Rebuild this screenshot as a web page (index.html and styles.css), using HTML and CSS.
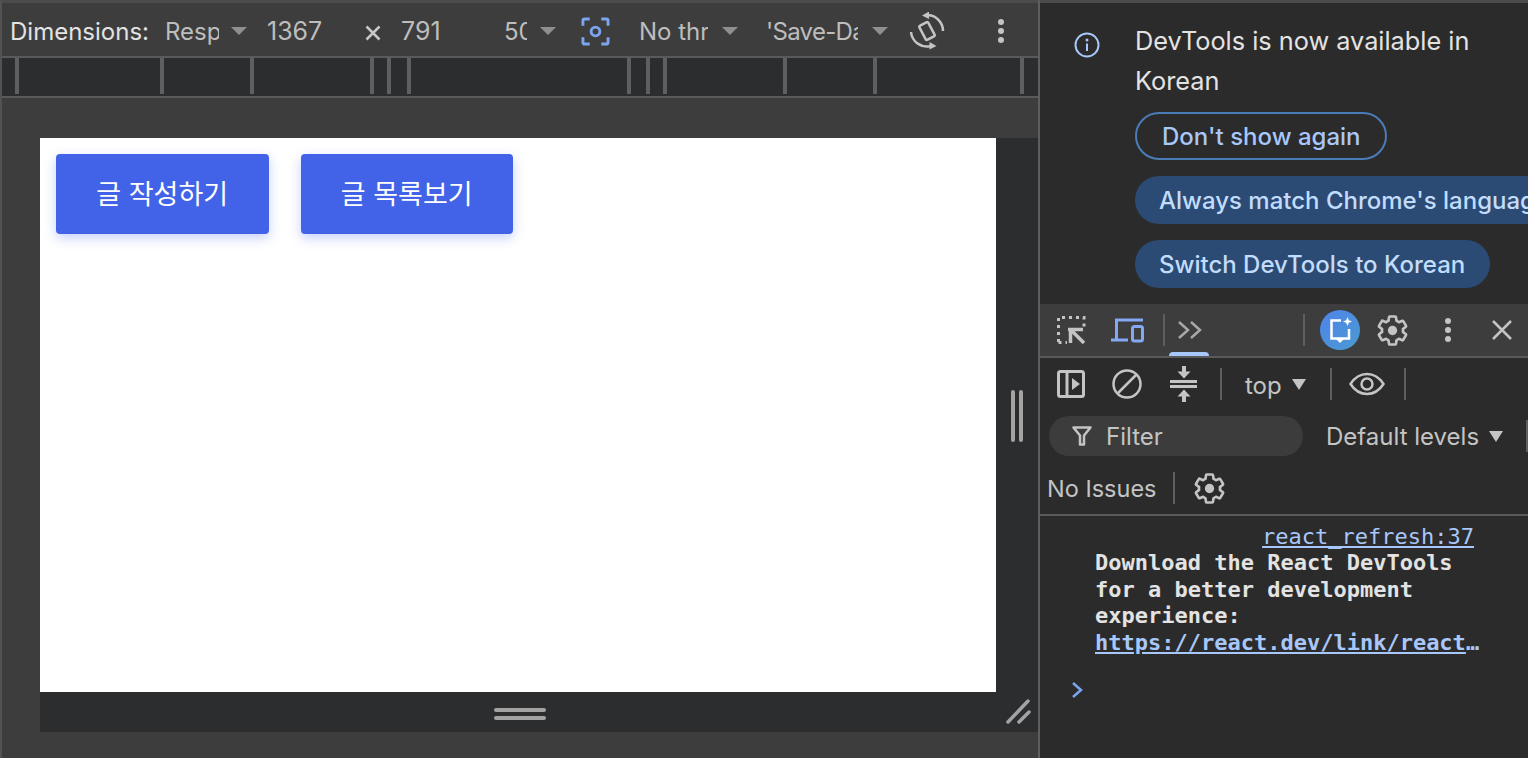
FILE: index.html
```html
<!DOCTYPE html>
<html lang="ko">
<head>
    <meta charset="UTF-8">
    <meta name="viewport" content="width=device-width, initial-scale=1.0">
    <title>DevTools</title>
    <link rel="stylesheet" href="styles.css">
</head>
<body>
    <div class="emulation">
        <div class="device-bar">
            <span class="bar-label">Dimensions:</span>
            <span class="select select-device">Resp</span>
            <span class="caret caret-device"></span>
            <span class="dim dim-w">1367</span>
            <svg class="times" width="16" height="16" viewBox="0 0 16 16"><path d="M1.500 1.500l13 13M14.500 1.500l-13 13"/></svg>
            <span class="dim dim-h">791</span>
            <span class="select select-zoom">50%</span>
            <span class="caret caret-zoom"></span>
            <svg class="focus-icon" width="29" height="29" viewBox="0 0 30 30">
                <path d="M9 2H3.500A1.500 1.500 0 0 0 2 3.500V9M21 2h5.500A1.500 1.500 0 0 1 28 3.500V9M9 28H3.500A1.500 1.500 0 0 1 2 26.500V21M21 28h5.500a1.500 1.500 0 0 0 1.500-1.500V21"/>
                <circle cx="15" cy="15" r="4.500"/>
            </svg>
            <span class="select select-throttle">No thrott</span>
            <span class="caret caret-throttle"></span>
            <span class="select select-save">'Save-Data</span>
            <span class="caret caret-save"></span>
            <svg class="rotate-icon" width="38" height="38" viewBox="0 0 38 38">
                <rect x="14" y="11" width="10" height="16" rx="1.500" transform="rotate(-28 19 19)"/>
                <path d="M20 3A16 16 0 0 1 35 19M3 20A16 16 0 0 0 23 34"/>
                <path class="solid" d="M14 3.500l7-4v7.500zM28.500 34l-7 3.500v-7.500z"/>
            </svg>
            <svg class="dots dots-device" width="6" height="24" viewBox="0 0 6 24"><circle cx="3" cy="3" r="3"/><circle cx="3" cy="12" r="3"/><circle cx="3" cy="21" r="3"/></svg>
        </div>

        <div class="ruler">
            <svg width="1036" height="38" viewBox="0 0 1036 38">
                <g fill="#5f5f5f">
                    <rect x="13" width="4" height="36"/><rect x="158" width="4" height="36"/>
                    <rect x="248" width="4" height="36"/><rect x="368" width="4" height="36"/>
                    <rect x="385" width="4" height="36"/><rect x="405" width="4" height="36"/>
                    <rect x="625" width="4" height="36"/><rect x="644" width="4" height="36"/>
                    <rect x="661" width="4" height="36"/><rect x="781" width="4" height="36"/>
                    <rect x="871" width="4" height="36"/><rect x="1018" width="4" height="36"/>
                </g>
            </svg>
        </div>

        <div class="stage">
            <div class="device-frame">
                <div class="frame-top">
                    <div class="viewport">
                        <button class="btn-main">글 작성하기</button>
                        <button class="btn-main">글 목록보기</button>
                    </div>
                    <div class="handle-right"><span></span><span></span></div>
                </div>
                <div class="frame-bottom">
                    <div class="handle-bottom"><span></span><span></span></div>
                    <svg class="handle-corner" width="26" height="26" viewBox="0 0 26 26"><path d="M2 23L22 2M13 23l10-10"/></svg>
                </div>
            </div>
        </div>
    </div>

    <div class="devtools">
        <div class="notice">
            <svg class="info-icon" width="26" height="26" viewBox="0 0 26 26">
                <circle cx="13" cy="13" r="11.500"/>
                <path d="M13 11.500V19"/>
                <circle class="info-dot" cx="13" cy="8" r="1.500"/>
            </svg>
            <div class="notice-body">
                <p class="notice-text">DevTools is now available in Korean</p>
                <button class="pill pill-outline">Don't show again</button>
                <button class="pill pill-filled pill-wide"><span>Always match Chrome's language</span></button>
                <button class="pill pill-filled">Switch DevTools to Korean</button>
            </div>
        </div>

        <div class="tab-bar">
            <svg class="inspect-icon" width="30" height="30" viewBox="0 0 30 30">
                <path class="dash" d="M2.500 27V2.500H28V12"/>
                <path class="dash" d="M2.500 27.500H11"/>
                <path d="M12 14.500h15M14.500 13v15M15 15l13 13"/>
            </svg>
            <svg class="device-icon" width="34" height="26" viewBox="0 0 34 26">
                <path d="M6.500 22V3H33M1 23h17"/>
                <rect x="22.500" y="9.500" width="10" height="14.500" rx="2"/>
            </svg>
            <span class="sep sep-tabs-1"></span>
            <svg class="more-tabs" width="26" height="20" viewBox="0 0 26 20"><path d="M2 2l9 8-9 8M14 2l9 8-9 8"/></svg>
            <span class="tab-marker"></span>
            <span class="sep sep-tabs-2"></span>
            <span class="ai-button">
                <svg width="24" height="28" viewBox="0 0 24 28">
                    <path class="ai-bubble" d="M13 4.500H3.500V22.500H21V13"/>
                    <path class="ai-star" d="M19.500 1l1.300 3.200L24 5.500l-3.200 1.300L19.500 10l-1.300-3.200L15 5.500l3.200-1.300zM8 23h8l-4 4z"/>
                </svg>
            </span>
            <svg class="gear gear-tabs" width="35" height="35" viewBox="0 0 24 24"><path d="M19.140 12.940c.04-.3.06-.61.06-.94 0-.32-.02-.64-.07-.94l2.030-1.580c.18-.14.23-.41.12-.61l-1.920-3.320c-.12-.22-.37-.29-.59-.22l-2.390.96c-.5-.38-1.030-.7-1.620-.94l-.36-2.540c-.04-.24-.24-.41-.48-.41h-3.840c-.24 0-.43.17-.47.41l-.36 2.540c-.59.24-1.130.57-1.620.94l-2.390-.96c-.22-.08-.47 0-.59.22L2.740 8.870c-.12.21-.08.47.12.61l2.030 1.580c-.05.3-.09.63-.09.94s.02.64.07.94l-2.030 1.580c-.18.14-.23.41-.12.61l1.920 3.320c.12.22.37.29.59.22l2.390-.96c.5.38 1.030.7 1.620.94l.36 2.540c.05.24.24.41.48.41h3.840c.24 0 .44-.17.47-.41l.36-2.540c.59-.24 1.130-.56 1.620-.94l2.390.96c.22.08.47 0 .59-.22l1.920-3.320c.12-.22.07-.47-.12-.61l-2.010-1.580z"/><circle cx="12" cy="12" r="3.200"/></svg>
            <svg class="dots dots-tabs" width="6" height="24" viewBox="0 0 6 24"><circle cx="3" cy="3" r="3"/><circle cx="3" cy="12" r="3"/><circle cx="3" cy="21" r="3"/></svg>
            <svg class="close-icon" width="20" height="20" viewBox="0 0 20 20"><path d="M1 1l18 18M19 1L1 19"/></svg>
        </div>

        <div class="console-bar">
            <svg class="sidebar-icon" width="28" height="28" viewBox="0 0 28 28">
                <rect x="1.500" y="1.500" width="25" height="25" rx="2"/>
                <path d="M10 1v26"/>
                <path class="solid" d="M15 8l8 6-8 6z"/>
            </svg>
            <svg class="clear-icon" width="30" height="30" viewBox="0 0 30 30"><circle cx="15" cy="15" r="13.500"/><path d="M5.500 24.500l19-19"/></svg>
            <svg class="collapse-icon" width="28" height="36" viewBox="0 0 28 36">
                <path class="collapse-line" d="M1 15.500h27M1 20.500h27"/>
                <path class="collapse-stem" d="M15 0v7M15 29v7"/>
                <path class="solid" d="M8.500 5.500h13L15 12.500zM15 23.500l6.500 7h-13z"/>
            </svg>
            <span class="sep sep-console-1"></span>
            <span class="top-select">top</span>
            <span class="caret caret-light caret-top"></span>
            <span class="sep sep-console-2"></span>
            <svg class="eye-icon" width="36" height="24" viewBox="0 0 36 24">
                <path d="M1.500 12C6 5 11.500 2 18 2s12 3 16.500 10C30 19 24.500 22 18 22S6 19 1.500 12z"/>
                <circle cx="18" cy="12" r="5.500"/>
            </svg>
            <span class="sep sep-console-3"></span>
        </div>

        <div class="filter-row">
            <div class="filter-box">
                <svg width="20" height="20" viewBox="0 0 20 20"><path d="M1.500 1.500h17l-6.500 8v9h-4v-9z"/></svg>
                <span>Filter</span>
            </div>
            <span class="levels">Default levels</span>
            <span class="caret caret-light caret-levels"></span>
            <span class="row-edge"></span>
        </div>

        <div class="issues-row">
            <span class="issues-label">No Issues</span>
            <span class="sep sep-issues"></span>
            <svg class="gear gear-issues" width="35" height="35" viewBox="0 0 24 24"><path d="M19.140 12.940c.04-.3.06-.61.06-.94 0-.32-.02-.64-.07-.94l2.030-1.580c.18-.14.23-.41.12-.61l-1.920-3.320c-.12-.22-.37-.29-.59-.22l-2.390.96c-.5-.38-1.030-.7-1.620-.94l-.36-2.540c-.04-.24-.24-.41-.48-.41h-3.840c-.24 0-.43.17-.47.41l-.36 2.540c-.59.24-1.130.57-1.620.94l-2.390-.96c-.22-.08-.47 0-.59.22L2.740 8.870c-.12.21-.08.47.12.61l2.030 1.580c-.05.3-.09.63-.09.94s.02.64.07.94l-2.030 1.580c-.18.14-.23.41-.12.61l1.920 3.320c.12.22.37.29.59.22l2.390-.96c.5.38 1.030.7 1.620.94l.36 2.540c.05.24.24.41.48.41h3.840c.24 0 .44-.17.47-.41l.36-2.540c.59-.24 1.130-.56 1.620-.94l2.390.96c.22.08.47 0 .59-.22l1.920-3.320c.12-.22.07-.47-.12-.61l-2.010-1.580z"/><circle cx="12" cy="12" r="3.200"/></svg>
        </div>

        <div class="log">
            <div class="log-source"><a>react_refresh:37</a></div>
            <div class="log-message">
                <strong>Download the React DevTools for a better development experience:</strong>
                <a class="log-link">https://react.dev/link/react-devtools</a>
            </div>
            <svg class="prompt" width="12" height="18" viewBox="0 0 12 18"><path d="M2 2l8 7-8 7"/></svg>
        </div>
    </div>
</body>
</html>
```

FILE: styles.css
```css
* {
    box-sizing: border-box;
}

html, body {
    height: 100%;
}

body {
    margin: 0;
    display: flex;
    width: 1528px;
    height: 758px;
    overflow: hidden;
    font-family: Inter, 'Noto Sans', sans-serif;
    font-size: 24px;
    background-color: #2b2b2b;
}

svg {
    flex: none;
    display: block;
    fill: none;
}

p {
    margin: 0;
}

.solid {
    fill: #c4c4c4;
    stroke: none;
}

/* left side: device emulation */
.emulation {
    width: 1040px;
    flex: none;
    display: flex;
    flex-direction: column;
    padding-top: 4px;
    background-color: #3d3d3d;
    border-left: 2px solid #525252;
    border-right: 2px solid #5e5e5e;
    box-shadow: inset 0 3px 0 #4c4c4c;
}

.device-bar {
    height: 54px;
    flex: none;
    display: flex;
    align-items: center;
    padding-left: 8px;
    padding-top: 2px;
    border-bottom: 2px solid #5a5a5a;
    color: #bdbdbd;
    white-space: nowrap;
}

.bar-label {
    width: 155px;
    flex: none;
    color: #e3e3e3;
}

.select {
    display: block;
    overflow: hidden;
    flex: none;
}

.select-device { width: 54px; }
.select-zoom { width: 23px; margin-left: 63px; }
.select-throttle { width: 69px; margin-left: 29px; }
.select-save { width: 92px; margin-left: 28px; letter-spacing: -0.7px; }

.caret {
    flex: none;
    width: 0;
    height: 0;
    border-left: 8px solid transparent;
    border-right: 8px solid transparent;
    border-top: 8px solid #8f8f8f;
}

.caret-device { margin-left: 12px; }
.caret-zoom { margin-left: 13px; }
.caret-throttle { margin-left: 14px; }
.caret-save { margin-left: 14px; }

.dim {
    flex: none;
    font-size: 25px;
}

.dim-w { width: 55px; margin-left: 20px; }
.dim-h { width: 40px; margin-left: 20px; }

.times {
    margin-left: 43px;
    margin-top: 4px;
    stroke: #c8c8c8;
    stroke-width: 2.500;
}

.focus-icon {
    margin-left: 25px;
    stroke: #7ca5f0;
    stroke-width: 3;
}

.rotate-icon {
    margin-left: 20px;
    stroke: #c4c4c4;
    stroke-width: 2.500;
}

.dots {
    fill: #c4c4c4;
}

.dots-device {
    margin-left: 52px;
}

.ruler {
    height: 40px;
    flex: none;
    background-color: #2c2d2f;
    border-bottom: 2px solid #5a5a5a;
}

.stage {
    flex: 1;
    padding: 40px 0 26px 38px;
    min-height: 0;
}

.device-frame {
    height: 594px;
    background-color: #2c2d2f;
    display: flex;
    flex-direction: column;
}

.frame-top {
    flex: none;
    height: 554px;
    display: flex;
}

.viewport {
    width: 956px;
    flex: none;
    display: flex;
    align-items: flex-start;
    gap: 32px;
    padding: 16px;
    background-color: #fff;
}

.btn-main {
    width: 212.500px;
    height: 80px;
    padding: 0 0 4px;
    border: none;
    border-radius: 4px;
    background-color: #4263e8;
    color: #fff;
    font-family: 'Noto Sans CJK KR', sans-serif;
    font-size: 27px;
    font-weight: 400;
    box-shadow: 0 4px 12px rgba(66, 99, 232, 0.3);
}

.handle-right {
    flex: 1;
    display: flex;
    justify-content: center;
    align-items: center;
    gap: 4px;
    padding-top: 2px;
}

.handle-right span {
    width: 4px;
    height: 52px;
    border-radius: 2px;
    background-color: #a3a3a3;
}

.frame-bottom {
    flex: 1;
    display: flex;
    align-items: center;
    position: relative;
}

.handle-bottom {
    width: 956px;
    display: flex;
    flex-direction: column;
    align-items: center;
    gap: 4px;
    padding-top: 4px;
    padding-left: 4px;
}

.handle-bottom span {
    width: 52px;
    height: 4px;
    border-radius: 2px;
    background-color: #a3a3a3;
}

.handle-corner {
    position: absolute;
    right: 6px;
    top: 7px;
    stroke: #a3a3a3;
    stroke-width: 3.500;
    stroke-linecap: round;
}

/* right side: devtools */
.devtools {
    flex: 1;
    min-width: 0;
    display: flex;
    flex-direction: column;
    background-color: #2b2b2b;
    box-shadow: inset 0 3px 0 #4c4c4c;
}

.notice {
    height: 304px;
    flex: none;
    display: flex;
    padding: 21px 0 0 34px;
    overflow: hidden;
}

.info-icon {
    margin-top: 11px;
    stroke: #a8c7fa;
    stroke-width: 2;
}

.info-dot {
    fill: #a8c7fa;
    stroke: none;
}

.notice-body {
    margin-left: 35px;
    flex: none;
    width: 358px;
    display: flex;
    flex-direction: column;
    align-items: flex-start;
}

.notice-text {
    width: 345px;
    font-size: 25.300px;
    line-height: 40px;
    color: #e3e3e3;
    margin-bottom: 11px;
}

.pill {
    height: 48px;
    flex: none;
    padding: 0 25px 0 24px;
    border-radius: 24px;
    font-family: inherit;
    font-size: 24px;
    font-weight: 500;
    white-space: nowrap;
    margin-bottom: 16px;
}

.pill-outline {
    padding-left: 25px;
    padding-right: 24px;
    border: 2px solid #4a7db8;
    background: none;
    color: #a8c7fa;
}

.pill-filled {
    border: none;
    background-color: #2b4b75;
    color: #c2dcfb;
}

.pill-wide {
    width: 460px;
    text-align: left;
}

.tab-bar {
    height: 54px;
    flex: none;
    display: flex;
    align-items: center;
    position: relative;
    padding-left: 16px;
    background-color: #3d3d3d;
    border-bottom: 2px solid #5a5a5a;
}

.inspect-icon {
    stroke: #c4c4c4;
    stroke-width: 3.500;
}

.inspect-icon .dash {
    stroke-width: 3;
    stroke-dasharray: 3 4;
}

.device-icon {
    margin-left: 24px;
    stroke: #85a8f5;
    stroke-width: 3;
}

.sep {
    flex: none;
    width: 2px;
    background-color: #5e5e5e;
}

.sep-tabs-1 { height: 32px; margin-left: 19px; }
.sep-tabs-2 { height: 32px; margin-left: 100px; }

.more-tabs {
    margin-left: 12px;
    stroke: #a8a8a8;
    stroke-width: 2.500;
}

.tab-marker {
    position: absolute;
    left: 129px;
    bottom: 0;
    width: 40px;
    height: 4px;
    border-radius: 4px 4px 0 0;
    background-color: #a8c7fa;
}

.ai-button {
    width: 40px;
    height: 40px;
    flex: none;
    margin-left: 15px;
    border-radius: 50%;
    display: flex;
    align-items: center;
    justify-content: center;
    background: linear-gradient(135deg, #4f83ea, #4a9bd0);
}

.ai-bubble {
    stroke: #fff;
    stroke-width: 2.500;
}

.ai-star {
    fill: #fff;
}

.gear {
    stroke: #c4c4c4;
    stroke-width: 1.800;
    stroke-linejoin: round;
}

.gear circle {
    fill: #c4c4c4;
    stroke: none;
}

.gear-tabs {
    margin-left: 15px;
}

.dots-tabs {
    margin-left: 35px;
}

.close-icon {
    margin-left: 41px;
    stroke: #c4c4c4;
    stroke-width: 2.500;
}

.console-bar {
    height: 52px;
    flex: none;
    display: flex;
    align-items: center;
    padding-left: 17px;
    color: #c4c4c4;
}

.sidebar-icon {
    stroke: #c4c4c4;
    stroke-width: 3;
}

.clear-icon {
    margin-left: 27px;
    stroke: #c4c4c4;
    stroke-width: 2.500;
}

.collapse-icon {
    margin-left: 27px;
    stroke: #c4c4c4;
}

.collapse-line {
    stroke-width: 3;
}

.collapse-stem {
    stroke-width: 4;
}

.sep-console-1 { height: 32px; margin-left: 23px; }
.sep-console-2 { height: 32px; margin-left: 24px; }
.sep-console-3 { height: 32px; margin-left: 19px; }

.top-select {
    margin-left: 23px;
    margin-top: 2px;
}

.caret-light {
    border-left-width: 7px;
    border-right-width: 7px;
    border-top: 11px solid #c4c4c4;
}

.caret-top {
    margin-left: 10px;
}

.eye-icon {
    margin-left: 17px;
    stroke: #c4c4c4;
    stroke-width: 2.500;
}

.filter-row {
    height: 52px;
    flex: none;
    display: flex;
    align-items: center;
    padding-left: 9px;
    color: #c4c4c4;
}

.filter-box {
    width: 254px;
    height: 40px;
    flex: none;
    display: flex;
    align-items: center;
    gap: 14px;
    padding-left: 23px;
    border-radius: 20px;
    background-color: #3c3c3c;
}

.filter-box svg {
    stroke: #c4c4c4;
    stroke-width: 2.500;
    stroke-linejoin: round;
}

.levels {
    flex: none;
    margin-left: 23px;
    white-space: nowrap;
}

.caret-levels {
    margin-left: 10px;
}

.row-edge {
    width: 2px;
    height: 32px;
    flex: none;
    margin-left: 23px;
    background-color: #5e5e5e;
}

.issues-row {
    height: 54px;
    flex: none;
    display: flex;
    align-items: center;
    padding-left: 7px;
    border-bottom: 2px solid #5a5a5a;
    color: #c4c4c4;
    font-size: 23.500px;
}

.sep-issues {
    height: 32px;
    margin-left: 16px;
}

.gear-issues {
    margin-left: 17px;
}

.log {
    flex: 1;
    padding-top: 8px;
    font-family: 'DejaVu Sans Mono', monospace;
    font-size: 22px;
    line-height: 26.400px;
    color: #e3e3e3;
}

.log-source {
    text-align: right;
    padding-right: 54px;
}

.log-source a {
    color: #a8c7fa;
    text-decoration: underline;
}

.log-message {
    width: 386px;
    margin-left: 55px;
}

.log-message strong {
    display: block;
}

.log-link {
    display: block;
    overflow: hidden;
    white-space: nowrap;
    text-overflow: ellipsis;
    font-weight: bold;
    color: #a8c7fa;
    text-decoration: underline;
}

.prompt {
    margin: 25px 0 0 31px;
    stroke: #7ca5f0;
    stroke-width: 2.500;
}
```
